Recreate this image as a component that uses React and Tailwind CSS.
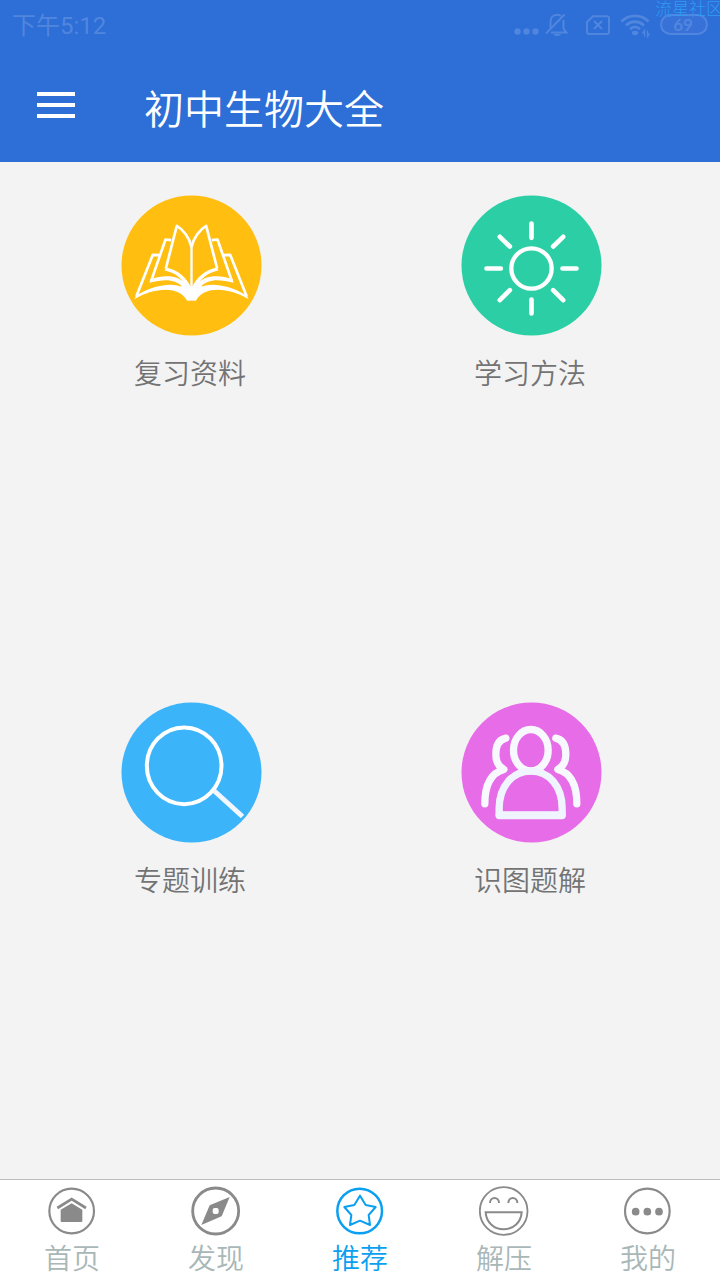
import clsx from 'clsx';

function StatusBar() {
  return (
    <div className="relative flex h-[54px] items-start justify-between overflow-hidden pl-3 pr-3 text-[#5186de]">
      <span className="mt-[8px] font-[Roboto,'Noto_Sans_CJK_SC',sans-serif] text-[24px] leading-[36px]">下午5:12</span>
      <div className="mt-3 flex">
        <svg className="h-[26px] w-[26px]" viewBox="0 0 26 26" fill="currentColor">
          <circle cx="4.5" cy="19.5" r="3.2" />
          <circle cx="13.5" cy="19.5" r="3.2" />
          <circle cx="22.5" cy="19.5" r="3.2" />
        </svg>
        <svg className="ml-[6px] h-[26px] w-[24px]" viewBox="0 0 24 26" fill="none" stroke="currentColor" strokeWidth="2">
          <path d="M1 21.500 L19.500 2.500" />
          <path d="M16 4 C12 1.500 5.500 3 5.500 10 V16 M6 20.500 H21.500 L18.500 16.500 V8" />
          <path d="M8.500 22 H16 C15 24.800 9.500 24.800 8.500 22 Z" fill="currentColor" stroke="none" />
        </svg>
        <svg className="ml-[16px] h-[26px] w-[26px]" viewBox="0 0 26 26" fill="none" stroke="currentColor" strokeWidth="2">
          <path d="M8 4.200 H22 Q24 4.200 24 6.200 V20 Q24 22 22 22 H4 Q2 22 2 20 V10 Z" />
          <path d="M9 9 L17 17 M17 9 L9 17" />
        </svg>
        <svg className="ml-[9px] h-[26px] w-[31px]" viewBox="0 0 31 26" fill="none" stroke="currentColor" strokeWidth="2.800">
          <path d="M1.500 9.500 C8.500 2 21.500 2 28.500 9.500" />
          <path d="M6 13.500 C11 8.500 19 8.500 24 13.500" />
          <path d="M10 17.200 C13 14.400 17 14.400 20 17.200" />
          <path d="M11.500 20 Q15 17.500 18.500 20 Q18 23 15 23.500 Q12 23 11.500 20 Z" fill="currentColor" stroke="none" />
          <path d="M24.500 24.500 V18.500 L22.500 21.500 M27.500 18.500 V24.500 L29.500 21.500" strokeWidth="1.400" />
        </svg>
        <div className="ml-[9px] mt-[2px] flex h-[21px] w-[48px] items-center justify-center rounded-full border-2 border-[#5186de] bg-[#3872d9] pr-[2px] font-[Lato] text-[17px] font-bold leading-none">
          69
        </div>
      </div>
      <span className="absolute left-[655px] top-0 whitespace-nowrap text-[17px] font-light leading-[16px] text-[#2f9bf4]">
        流星社区
      </span>
    </div>
  );
}

function Header() {
  return (
    <header className="h-[162px] shrink-0 bg-[#2d6ed7]">
      <StatusBar />
      <div className="flex h-[108px] items-center pl-[37px]">
        <div className="flex w-[38px] flex-col gap-[7px] pb-[6px]">
          <span className="h-1 bg-white" />
          <span className="h-1 bg-white" />
          <span className="h-1 bg-white" />
        </div>
        <h1 className="ml-[69px] mt-[-3px] text-[40px] font-[350] leading-[58px] text-white">初中生物大全</h1>
      </div>
    </header>
  );
}

function BookHalf() {
  return (
    <>
      <g fill="none" stroke="#fff" strokeWidth="8" strokeLinejoin="round">
        <path d="M210 154 C216 128 234 102 254 91 L287 219" />
        <path d="M271 134 L288 132 L331 256" />
        <path d="M305 179 L326 178 L376 304" />
      </g>
      <g fill="#fff">
        <path d="M286 216 C250 224 225 245 210 278 V300 L232 262 C248 241 265 230 291 225 Z" />
        <path d="M334 252 C290 235 250 240 226 264 L212 290 L236 275 C258 251 290 249 336 262 Z" />
        <path d="M374 299 C320 266 262 260 236 276 L212 300 V315 H223 C250 268 325 277 382 311 Z" />
        <path d="M209 276 L228 262 L242 270 L223 315 H209 Z" />
      </g>
    </>
  );
}

function BookIcon() {
  return (
    <>
      <BookHalf />
      <g transform="translate(420 0) scale(-1 1)">
        <BookHalf />
      </g>
      <path d="M210 150 V310" stroke="#fff" strokeWidth="7" />
    </>
  );
}

function SunIcon() {
  return (
    <g fill="none" stroke="#fff" strokeWidth="14" strokeLinecap="round">
      <circle cx="210" cy="219" r="60.500" strokeWidth="13" />
      <path d="M210 84 V127 M210 312 V354 M75 219 H118 M303 219 H345" />
      <path d="M115 124 L145 153 M305 124 L275 153 M145 284 L115 314 M275 284 L305 314" />
    </g>
  );
}

function SearchIcon() {
  return (
    <g fill="none" stroke="#fff">
      <ellipse cx="188" cy="190" rx="112" ry="115" strokeWidth="12" />
      <path d="M277 264 L363 342" stroke="#f1f6ff" strokeWidth="15" />
    </g>
  );
}

function PeopleIcon() {
  return (
    <g fill="none" stroke="#f7f9ff" strokeWidth="22" strokeLinecap="round" strokeLinejoin="round">
      <ellipse cx="208" cy="143" rx="52" ry="62" />
      <path d="M113 339 H302 V318 C302 250 262 206 208 206 S113 250 113 318 Z" stroke="#eff4ff" />
      <path d="M113 337 H302" stroke="#eff4ff" />
      <path d="M133 107 C110 112 103 134 103 156 C103 176 113 193 127 201 C90 211 70 246 70 304" />
      <path d="M283 107 C306 112 313 134 313 156 C313 176 303 193 289 201 C326 211 346 246 346 304" />
    </g>
  );
}

const categories = [
  { label: '复习资料', color: '#ffbe10', Icon: BookIcon },
  { label: '学习方法', color: '#2ccfa5', Icon: SunIcon },
  { label: '专题训练', color: '#3bb4f9', Icon: SearchIcon },
  { label: '识图题解', color: '#e76ce8', Icon: PeopleIcon },
];

function Category({ label, color, Icon }) {
  return (
    <div className="flex flex-col items-center">
      <svg className="ml-[3px] h-[141px] w-[141px]" viewBox="-1.5 -1.5 423 423">
        <circle cx="210" cy="210" r="210" fill={color} />
        <Icon />
      </svg>
      <span className="mt-[16px] text-[28px] font-[350] leading-[40px] text-[#737373]">{label}</span>
    </div>
  );
}

function HomeIcon() {
  return (
    <>
      <circle cx="74" cy="75" r="67" strokeWidth="6.500" />
      <path d="M31 66 L74 39 L117 66" strokeWidth="8" />
      <path d="M41 71 L74 52 L106 71 V105 Q106 108 103 108 H44 Q41 108 41 105 Z" fill="currentColor" stroke="none" />
    </>
  );
}

function CompassIcon() {
  return (
    <>
      <circle cx="74" cy="75" r="69" strokeWidth="8.500" />
      <path d="M116 33 L92 91 L31 117 L56 58 Z" fill="currentColor" stroke="none" />
      <rect x="65" y="66" width="18" height="18" rx="6" fill="#fff" stroke="none" />
    </>
  );
}

function StarIcon() {
  return (
    <>
      <circle cx="74" cy="75" r="67" strokeWidth="7.500" />
      <path
        d="M75 29 L92 57 L122 63 L101 87 L105 117 L75 104 L45 117 L49 87 L28 63 L58 57 Z"
        strokeWidth="6"
        strokeLinejoin="round"
      />
    </>
  );
}

function SmileIcon() {
  return (
    <>
      <circle cx="74" cy="75" r="71.500" strokeWidth="5.500" />
      <path d="M33 51 C33 31 60 31 60 51 M88 51 C88 31 115 31 115 51" strokeWidth="6" />
      <path d="M20 79 H128 C126 108 104 130 74 130 S22 108 20 79 Z" strokeWidth="6" />
    </>
  );
}

function MoreIcon() {
  return (
    <>
      <circle cx="73" cy="75" r="67" strokeWidth="6.500" />
      <g fill="currentColor" stroke="none">
        <circle cx="38" cy="77" r="11.500" />
        <circle cx="73" cy="77" r="11.500" />
        <circle cx="108" cy="77" r="11.500" />
      </g>
    </>
  );
}

const tabs = [
  { label: '首页', Icon: HomeIcon },
  { label: '发现', Icon: CompassIcon },
  { label: '推荐', Icon: StarIcon, active: true },
  { label: '解压', Icon: SmileIcon },
  { label: '我的', Icon: MoreIcon },
];

function TabBar() {
  return (
    <nav className="grid h-[101px] shrink-0 grid-cols-5 border-t border-[#bdbdbd] bg-white">
      {tabs.map(({ label, Icon, active }) => (
        <div key={label} className="flex flex-col items-center pt-[6px]">
          <svg
            className={clsx('h-[50px] w-[50px]', active ? 'text-[#0a9ff0]' : 'text-[#8a8a8a]')}
            viewBox="0 0 150 150"
            fill="none"
            stroke="currentColor"
          >
            <Icon />
          </svg>
          <span className={clsx('mt-px text-[28px] font-[350] leading-[40px]', active ? 'text-[#0a9ff0]' : 'text-[#a9b7b7]')}>
            {label}
          </span>
        </div>
      ))}
    </nav>
  );
}

export default function App() {
  return (
    <div className="flex h-[1280px] w-[720px] flex-col overflow-hidden bg-[#f3f3f3] font-['Noto_Sans_CJK_SC',sans-serif]">
      <Header />
      <main className="grid min-h-0 flex-1 auto-rows-[507px] grid-cols-2 overflow-hidden px-5 pt-[33px]">
        {categories.map((item) => (
          <Category key={item.label} {...item} />
        ))}
      </main>
      <TabBar />
    </div>
  );
}
